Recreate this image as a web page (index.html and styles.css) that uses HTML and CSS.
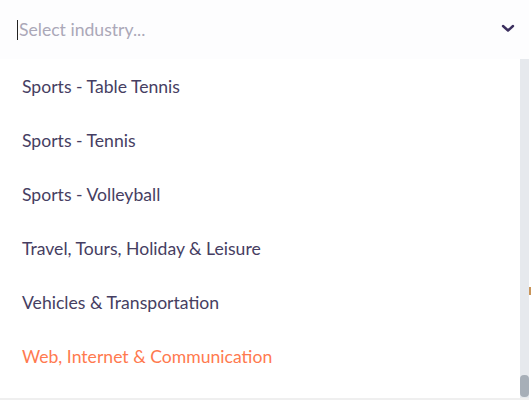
FILE: index.html
```html
<!DOCTYPE html>
<html lang="en">
<head>
    <meta charset="UTF-8">
    <meta name="viewport" content="width=device-width, initial-scale=1.0">
    <title>Select industry</title>
    <link rel="stylesheet" href="styles.css">
</head>
<body>
    <div class="page">
        <div class="dropdown">
            <div class="control">
                <span class="placeholder">Select industry...</span>
                <svg class="chevron" width="14" height="9" viewBox="0 0 14 9">
                    <path d="M2 2 L7 6.5 L12 2" fill="none" stroke="#3b2f5e" stroke-width="2.4" stroke-linecap="round" stroke-linejoin="round"/>
                </svg>
            </div>
            <div class="menu">
                <ul class="options">
                    <li>Sports - Table Tennis</li>
                    <li>Sports - Tennis</li>
                    <li>Sports - Volleyball</li>
                    <li>Travel, Tours, Holiday &amp; Leisure</li>
                    <li>Vehicles &amp; Transportation</li>
                    <li class="active">Web, Internet &amp; Communication</li>
                </ul>
                <div class="scrollbar">
                    <div class="thumb"></div>
                </div>
            </div>
        </div>
        <div class="edge">
            <span class="mark"></span>
        </div>
    </div>
</body>
</html>
```

FILE: styles.css
```css
body {
    margin: 0;
    font-family: Lato, "Open Sans", sans-serif;
    background-color: #fff;
}

.page {
    display: flex;
    height: 400px;
}

.dropdown {
    width: 529px;
    display: flex;
    flex-direction: column;
}

.control {
    height: 59px;
    display: flex;
    align-items: center;
    justify-content: space-between;
    padding: 0 14px 0 17px;
    background-color: #fdfdfe;
}

.placeholder {
    font-size: 17.6px;
    color: #aba8b8;
    border-left: 1px solid #222;
    padding-left: 1px;
    line-height: 20px;
}

.chevron {
    margin-top: -2px;
}

.menu {
    display: flex;
    height: 339px;
    border-bottom: 2px solid #efefef;
}

.options {
    flex: 1;
    list-style: none;
    margin: 0;
    padding: 1px 0 0 22px;
}

.options li {
    height: 54px;
    line-height: 54px;
    font-size: 17.6px;
    color: #463e62;
}

.options li.active {
    color: #ff7a4f;
}

.scrollbar {
    width: 9px;
    background-color: #e6e9ed;
    display: flex;
    flex-direction: column;
    justify-content: flex-end;
}

.thumb {
    height: 22px;
    margin-bottom: 1px;
    border-radius: 4px;
    background-color: #a7afb8;
}

.edge {
    flex: 1;
    position: relative;
}

.mark {
    position: absolute;
    top: 287px;
    left: 0;
    width: 2px;
    height: 8px;
    background-color: #c9955a;
}
```
